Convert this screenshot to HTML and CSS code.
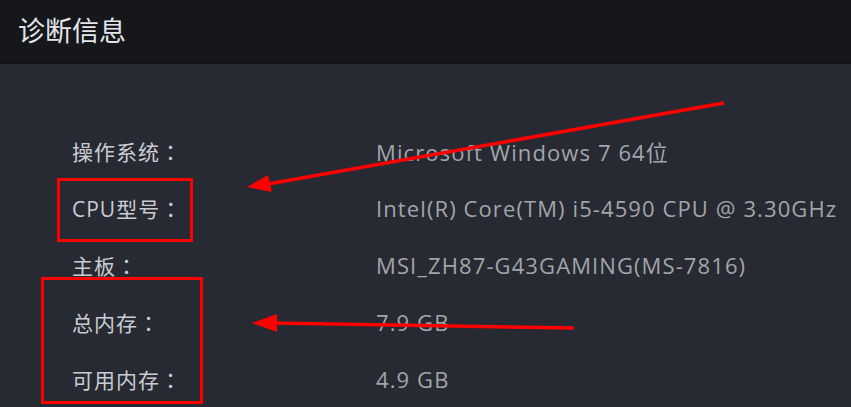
FILE: index.html
```html
<!DOCTYPE html>
<html lang="zh">
<head>
<meta charset="utf-8">
<link rel="stylesheet" href="styles.css">
</head>
<body>
<div class="panel">
  <header class="head">诊断信息</header>
  <section class="body">
    <div class="row"><span class="label">操作系统<span class="colon" lang="ja">：</span></span><span class="value">Microsoft Windows 7 64位</span></div>
    <div class="row"><span class="label">CPU型号<span class="colon" lang="ja">：</span></span><span class="value">Intel(R) Core(TM) i5-4590 CPU @ 3.30GHz</span></div>
    <div class="row"><span class="label">主板<span class="colon" lang="ja">：</span></span><span class="value">MSI_ZH87-G43GAMING(MS-7816)</span></div>
    <div class="row"><span class="label">总内存<span class="colon" lang="ja">：</span></span><span class="value">7.9 GB</span></div>
    <div class="row"><span class="label">可用内存<span class="colon" lang="ja">：</span></span><span class="value">4.9 GB</span></div>
  </section>
  <svg class="marks" width="851" height="407" viewBox="0 0 851 407">
    <rect x="58.5" y="179.5" width="133" height="61" fill="none" stroke="#f00" stroke-width="3"/>
    <rect x="42.5" y="278.5" width="159" height="124" fill="none" stroke="#f00" stroke-width="3"/>
    <line x1="724" y1="103" x2="268" y2="184" stroke="#f00" stroke-width="3.5"/>
    <polygon points="247,187 268,175 272,192" fill="#f00"/>
    <line x1="574" y1="328" x2="274" y2="323" stroke="#f00" stroke-width="3.5"/>
    <polygon points="252,323 277,314 277,332" fill="#f00"/>
  </svg>
</div>
</body>
</html>
```
FILE: styles.css
```css
html, body {
  margin: 0;
  padding: 0;
  background: #272a32;
}
.panel {
  position: relative;
  width: 851px;
  height: 407px;
  overflow: hidden;
  background: #272a32;
  font-family: "Open Sans", "Noto Sans CJK SC", sans-serif;
}
.head {
  height: 64px;
  box-sizing: border-box;
  padding-left: 18px;
  display: flex;
  align-items: center;
  background: #16171b;
  border-bottom: 2px solid #121316;
  color: #e4e6ea;
  font-family: "Noto Sans CJK SC", sans-serif;
  font-size: 27px;
  padding-bottom: 3px;
}
.body {
  padding: 58px 0 0 72px;
}
.row {
  display: flex;
  align-items: center;
  height: 57px;
}
.label {
  width: 304px;
  flex: none;
  color: #c9ccd2;
  font-size: 21px;
  letter-spacing: 1px;
}
.colon {
  font-family: "Noto Sans CJK JP", sans-serif;
}
.value {
  color: #a2a5ab;
  font-size: 22px;
  letter-spacing: 1.1px;
}
.marks {
  position: absolute;
  left: 0;
  top: 0;
  pointer-events: none;
}
```
